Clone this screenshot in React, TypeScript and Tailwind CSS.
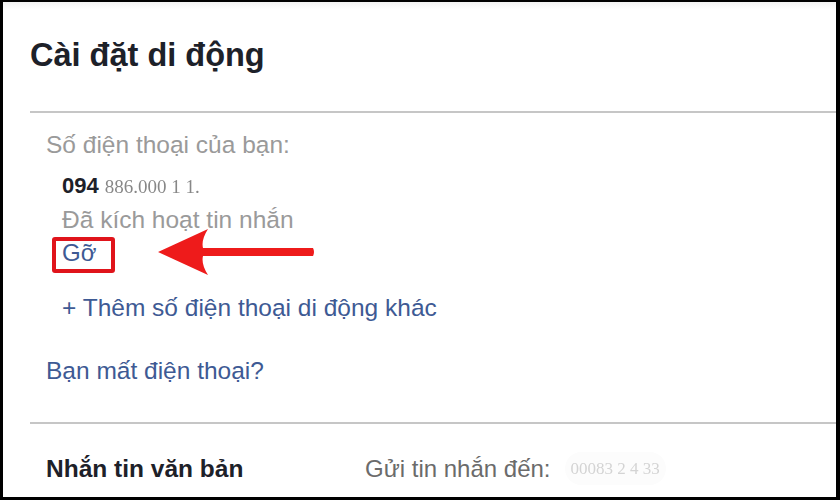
export default function App() {
  return (
    <div className="h-[500px] w-[840px] bg-black pb-[3px] pl-[3px] pr-[4px] pt-[2px] font-['Liberation_Sans',Arial,sans-serif]">
      <div className="relative h-full w-full overflow-hidden bg-white">
        <div className="pointer-events-none absolute inset-x-0 top-0 h-[8px] bg-gradient-to-b from-[#f2f2f2] to-white" />

        <h1 className="relative pl-[27px] pt-[33px] text-[32.5px] font-bold leading-[40px] text-[#1d2129]">
          Cài đặt di động
        </h1>

        <div className="ml-[27px] mt-[36px] h-[2px] bg-[#c6c6c6]" />

        <div className="pl-[43px]">
          <p className="mt-[15px] text-[24.5px] leading-[33px] text-[#9a9a9a]">
            Số điện thoại của bạn:
          </p>

          <div className="pl-[16px]">
            <p className="mt-[8px] text-[22px] leading-[33px] text-[#1d2129]">
              <span className="font-bold">094</span>{" "}
              <span className="inline-block font-['Liberation_Serif',serif] text-[19px] text-[#555] opacity-70 blur-[0.6px]">
                886.000 1 1.
              </span>
            </p>
            <p className="text-[24.5px] leading-[33px] text-[#9a9a9a]">
              Đã kích hoạt tin nhắn
            </p>
            <div className="relative flex items-center">
              <span className="relative inline-block text-[24px] leading-[33px] text-[#3e5a94]">
                Gỡ
                <span className="absolute -left-[10px] -right-[19px] top-[1px] bottom-[-4px] rounded-[3px] border-[4px] border-[#e0141b]" />
              </span>
              <svg
                className="absolute left-[94px] top-[-8px]"
                width="160"
                height="48"
                viewBox="0 0 160 48"
              >
                <path
                  d="M2 24 L52 1 Q45 12 47 20 L157 20 Q159 24 157 28 L47 28 Q45 36 52 47 Z"
                  fill="#ee1b1b"
                />
              </svg>
            </div>
            <p className="mt-[22px] text-[24.5px] leading-[33px] text-[#3e5a94]">
              + Thêm số điện thoại di động khác
            </p>
          </div>

          <p className="mt-[30px] text-[24.5px] leading-[33px] text-[#3e5a94]">
            Bạn mất điện thoại?
          </p>
        </div>

        <div className="ml-[27px] mt-[35px] h-[2px] bg-[#c6c6c6]" />

        <div className="mt-[28px] flex pl-[43px] leading-[33px]">
          <span className="w-[319px] text-[24.5px] font-bold text-[#1d2129]">
            Nhắn tin văn bản
          </span>
          <span className="text-[24px] text-[#6b6b6b]">Gửi tin nhắn đến:</span>
          <span className="ml-[14px] inline-block rounded-full bg-[#fcfcfc] px-[6px] font-['Liberation_Serif',serif] text-[17px] text-[#d4d4d4] blur-[0.7px]">
            00083 2 4 33
          </span>
        </div>
      </div>
    </div>
  );
}
